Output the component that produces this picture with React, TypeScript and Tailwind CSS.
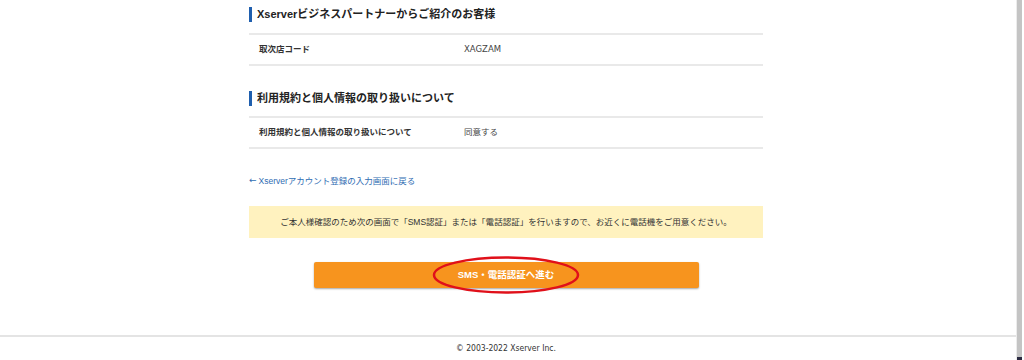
import React from "react";

const jp = "font-['Liberation_Sans','Noto_Sans_CJK_JP',sans-serif]";

function Heading({ children }: { children: React.ReactNode }) {
  return (
    <div className={`h-[15px] border-l-[3px] border-[#1f5fae] pl-[5px] flex items-center text-[11px] font-bold text-[#222] ${jp}`}>
      {children}
    </div>
  );
}

function Row({ label, value, mono }: { label: string; value: string; mono?: boolean }) {
  return (
    <div className="border-t-2 border-b-2 border-[#e9e9e9] flex items-center h-[33px]">
      <div className={`w-[215px] pl-[10px] text-[8.5px] font-bold text-[#333] ${jp}`}>{label}</div>
      <div
        className={`text-[8.5px] text-[#444] ${
          mono ? "font-['DejaVu_Sans','Noto_Sans_CJK_JP',sans-serif]" : jp
        }`}
      >
        {value}
      </div>
    </div>
  );
}

export default function App() {
  return (
    <div className="w-[1024px] h-[360px] flex bg-white overflow-hidden">
      <div className="w-[1016px] flex flex-col">
        <div className="h-[335px] pr-[4px]">
          <div className="w-[514px] mx-auto flex flex-col">
            <div className="mt-[7px]">
              <Heading>Xserverビジネスパートナーからご紹介のお客様</Heading>
            </div>
            <div className="mt-[11px]">
              <Row label="取次店コード" value="XAGZAM" mono />
            </div>
            <div className="mt-[25px]">
              <Heading>利用規約と個人情報の取り扱いについて</Heading>
            </div>
            <div className="mt-[10px]">
              <Row label="利用規約と個人情報の取り扱いについて" value="同意する" />
            </div>
            <div className={`mt-[26px] h-[12px] flex items-center text-[8.5px] text-[#2f6db3] ${jp}`}>
              <span className="font-['DejaVu_Sans',sans-serif] text-[9px] mr-[2px]">←</span>
              Xserverアカウント登録の入力画面に戻る
            </div>
            <div
              className={`mt-[19px] h-[32px] bg-[#fff2bf] flex items-center justify-center text-[8.5px] text-[#333] ${jp}`}
            >
              ご本人様確認のため次の画面で「SMS認証」または「電話認証」を行いますので、お近くに電話機をご用意ください。
            </div>
            <div className="mt-[24px] relative w-[385px] mx-auto">
              <div
                className={`h-[26px] bg-[#f7941e] rounded-[2px] shadow-[0_1px_2px_rgba(0,0,0,0.35)] flex items-center justify-center text-white text-[9.5px] font-bold ${jp}`}
              >
                SMS・電話認証へ進む
              </div>
              <svg
                className="absolute left-[117px] top-[-7px] pointer-events-none"
                width="150"
                height="40"
                viewBox="0 0 150 40"
              >
                <ellipse cx="75" cy="20" rx="72" ry="17.5" fill="none" stroke="#e0101a" strokeWidth="2.5" />
              </svg>
            </div>
          </div>
        </div>
        <div className="border-t-2 border-[#e4e4e4] flex-1 flex items-center justify-center pr-[4px]">
          <span className="text-[8.5px] text-[#333] font-['DejaVu_Sans_Condensed','DejaVu_Sans',sans-serif]">
            © 2003-2022 Xserver Inc.
          </span>
        </div>
      </div>
      <div className="w-px bg-[#ececec]" />
      <div className="w-[5px] bg-[#c4c4c4] flex flex-col justify-end">
        <div className="h-[3px] bg-[#2a2a40]" />
      </div>
      <div className="w-[2px] bg-white" />
    </div>
  );
}
